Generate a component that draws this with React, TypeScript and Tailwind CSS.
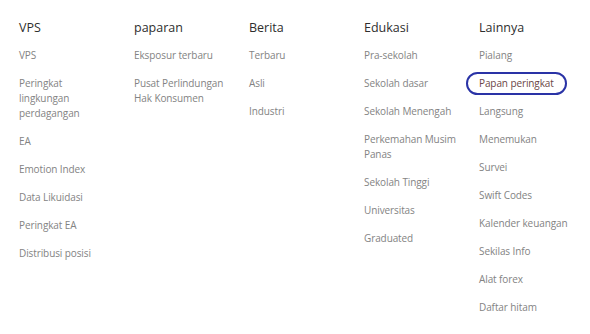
import React from 'react';

interface Column {
  title: string;
  items: string[];
}

const columns: Column[] = [
  {
    title: 'VPS',
    items: ['VPS', 'Peringkat lingkungan perdagangan', 'EA', 'Emotion Index', 'Data Likuidasi', 'Peringkat EA', 'Distribusi posisi'],
  },
  { title: 'paparan', items: ['Eksposur terbaru', 'Pusat Perlindungan Hak Konsumen'] },
  { title: 'Berita', items: ['Terbaru', 'Asli', 'Industri'] },
  {
    title: 'Edukasi',
    items: ['Pra-sekolah', 'Sekolah dasar', 'Sekolah Menengah', 'Perkemahan Musim Panas', 'Sekolah Tinggi', 'Universitas', 'Graduated'],
  },
  {
    title: 'Lainnya',
    items: ['Pialang', 'Papan peringkat', 'Langsung', 'Menemukan', 'Survei', 'Swift Codes', 'Kalender keuangan', 'Sekilas Info', 'Alat forex', 'Daftar hitam'],
  },
];

const HIGHLIGHT = 'Papan peringkat';

export default function App() {
  return (
    <div className="w-[590px] h-[334px] bg-white overflow-hidden pt-[18px] pl-[19px] font-['Open_Sans',sans-serif]">
      <div className="grid grid-cols-[repeat(5,115px)]">
        {columns.map((col) => (
          <div key={col.title} className="flex flex-col">
            <h3 className="text-[12.5px] leading-[20px] text-[#2e2e2e]">{col.title}</h3>
            <ul className="mt-[10px] flex flex-col gap-[13px] w-[95px]">
              {col.items.map((item) => (
                <li key={item} className="text-[10px] leading-[15px] tracking-[-0.1px] text-[#838383]">
                  {item === HIGHLIGHT ? (
                    <span className="relative text-[#6b4646]">
                      {item}
                      <span className="absolute -left-[13px] -right-[13px] -top-[4.5px] -bottom-[4.5px] rounded-[12px] border-[2.5px] border-[#2a33a6]" />
                    </span>
                  ) : (
                    item
                  )}
                </li>
              ))}
            </ul>
          </div>
        ))}
      </div>
    </div>
  );
}
